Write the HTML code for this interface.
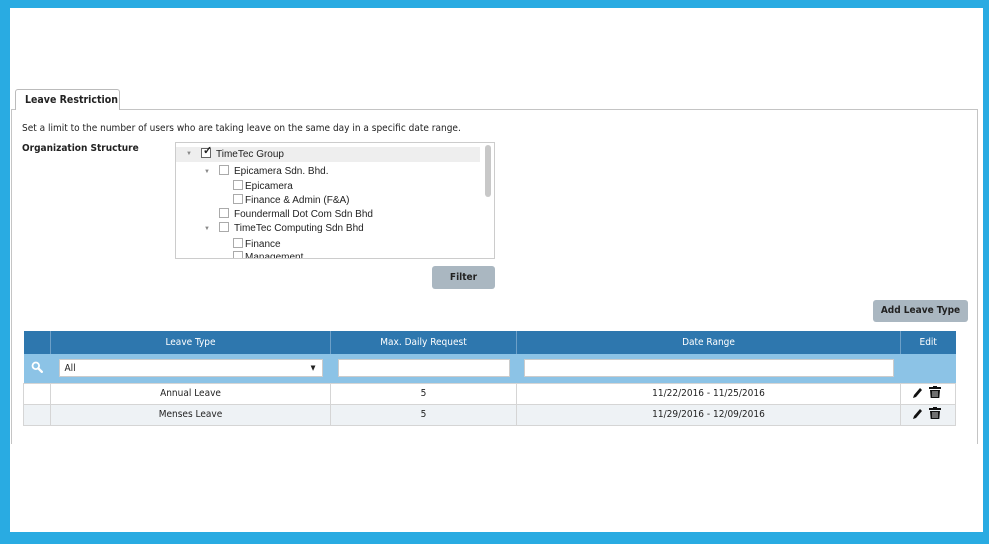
<!DOCTYPE html>
<html><head><style>
*{box-sizing:border-box;margin:0;padding:0}
body{width:989px;height:544px;background:#29abe2;position:relative;font-family:"DejaVu Sans Condensed","Liberation Sans",sans-serif;overflow:hidden;color:#222}
.page{position:absolute;left:10px;top:8px;width:973px;height:524px;background:#fff}
.a{position:absolute;white-space:nowrap}
.tab{left:15px;top:89px;width:105px;height:21px;border:1px solid #bbb;border-bottom:none;border-radius:3px 3px 0 0;background:#fff;font-size:10.5px;font-weight:bold;padding:4px 0 0 9px;z-index:2}
.panel{left:11px;top:109px;width:967px;height:335px;border:1px solid #c4c4c4;border-bottom:none}
.t{font-size:10px}
.tree{left:175px;top:142px;width:320px;height:117px;border:1px solid #ccc;font-family:"Liberation Sans",sans-serif;font-size:10px;overflow:hidden}
.tree div{position:absolute;white-space:nowrap}
.cb{display:inline-block;width:10px;height:10px;border:1px solid #aaa;vertical-align:-1px;margin-right:5px;background:#fff}
.arr{font-size:6px;color:#888}
.btn{background:#aab7c1;border-radius:3px;font-size:10px;font-weight:bold;text-align:center;color:#222}
table{position:absolute;left:23px;top:331px;width:933px;border-collapse:collapse;font-size:10px}
td{border:1px solid #d5d5d5;text-align:center;height:21px}
th{background:#2e77ae;color:#fff;font-weight:normal;height:23px;border-left:1px solid #6da0c8;font-size:10px}
.f td{background:#8cc3e6;height:29px;border:none;text-align:left;padding:0 7px}
.in{background:#fff;height:18px;border:1px solid #ccc;font-size:10px;padding:3px 5px;position:relative}
.r2 td{background:#eef2f5}
</style></head><body>
<div class="page"></div>
<div class="a panel"></div>
<div class="a tab">Leave Restriction</div>
<div class="a t" style="left:22px;top:123px">Set a limit to the number of users who are taking leave on the same day in a specific date range.</div>
<div class="a t" style="left:22px;top:143px;font-weight:bold">Organization Structure</div>
<div class="a tree">
<div style="left:0;top:4px;width:304px;height:15px;background:#eee"></div>
<div style="left:10px;top:8px" class="arr">▼</div>
<div style="left:25px;top:5px"><span class="cb" style="border-color:#666;position:relative"><span style="position:absolute;left:1px;top:-5px;font-size:11px;font-weight:bold">✓</span></span>TimeTec Group</div>
<div style="left:28px;top:26px" class="arr">▼</div>
<div style="left:43px;top:22px"><span class="cb"></span>Epicamera Sdn. Bhd.</div>
<div style="left:57px;top:37px"><span class="cb" style="margin-right:2px"></span>Epicamera</div>
<div style="left:57px;top:51px"><span class="cb" style="margin-right:2px"></span>Finance &amp; Admin (F&amp;A)</div>
<div style="left:43px;top:65px"><span class="cb"></span>Foundermall Dot Com Sdn Bhd</div>
<div style="left:28px;top:83px" class="arr">▼</div>
<div style="left:43px;top:79px"><span class="cb"></span>TimeTec Computing Sdn Bhd</div>
<div style="left:57px;top:95px"><span class="cb" style="margin-right:2px"></span>Finance</div>
<div style="left:57px;top:108px"><span class="cb" style="margin-right:2px"></span>Management</div>
<div style="left:309px;top:2px;width:6px;height:52px;background:#c8c8c8;border-radius:3px"></div>
</div>
<div class="a btn" style="left:432px;top:266px;width:63px;height:23px;line-height:23px">Filter</div>
<div class="a btn" style="left:873px;top:300px;width:95px;height:22px;line-height:22px">Add Leave Type</div>
<table>
<tr><th style="width:27px;border-left:none"></th><th style="width:280px">Leave Type</th><th style="width:186px">Max. Daily Request</th><th style="width:384px">Date Range</th><th>Edit</th></tr>
<tr class="f"><td style="text-align:center;padding:0"><svg width="12" height="12" viewBox="0 0 12 12"><circle cx="4.8" cy="4.8" r="3.3" fill="none" stroke="#fff" stroke-width="1.8"/><path d="M7.3 7.3L10.8 10.8" stroke="#fff" stroke-width="2.4" stroke-linecap="round"/></svg></td><td style="padding:0 8px"><div class="in">All<span style="position:absolute;right:6px;top:4px;font-size:7px">▼</span></div></td><td><div class="in"></div></td><td><div class="in"></div></td><td></td></tr>
<tr><td></td><td>Annual Leave</td><td>5</td><td>11/22/2016 - 11/25/2016</td><td><svg width="34" height="13" viewBox="0 0 34 13"><path d="M2 12L3 9L9 2L11 4L5 11Z" fill="#111"/><rect x="18" y="1" width="12" height="2" fill="#111"/><rect x="22" y="0" width="4" height="2" fill="#111"/><path d="M19 4H29L28.3 12H19.7Z" fill="#111"/><path d="M22 5V11M24 5V11M26 5V11" stroke="#fff" stroke-width="0.8"/></svg></td></tr>
<tr class="r2"><td></td><td>Menses Leave</td><td>5</td><td>11/29/2016 - 12/09/2016</td><td><svg width="34" height="13" viewBox="0 0 34 13"><path d="M2 12L3 9L9 2L11 4L5 11Z" fill="#111"/><rect x="18" y="1" width="12" height="2" fill="#111"/><rect x="22" y="0" width="4" height="2" fill="#111"/><path d="M19 4H29L28.3 12H19.7Z" fill="#111"/><path d="M22 5V11M24 5V11M26 5V11" stroke="#fff" stroke-width="0.8"/></svg></td></tr>
</table>
</body></html>
